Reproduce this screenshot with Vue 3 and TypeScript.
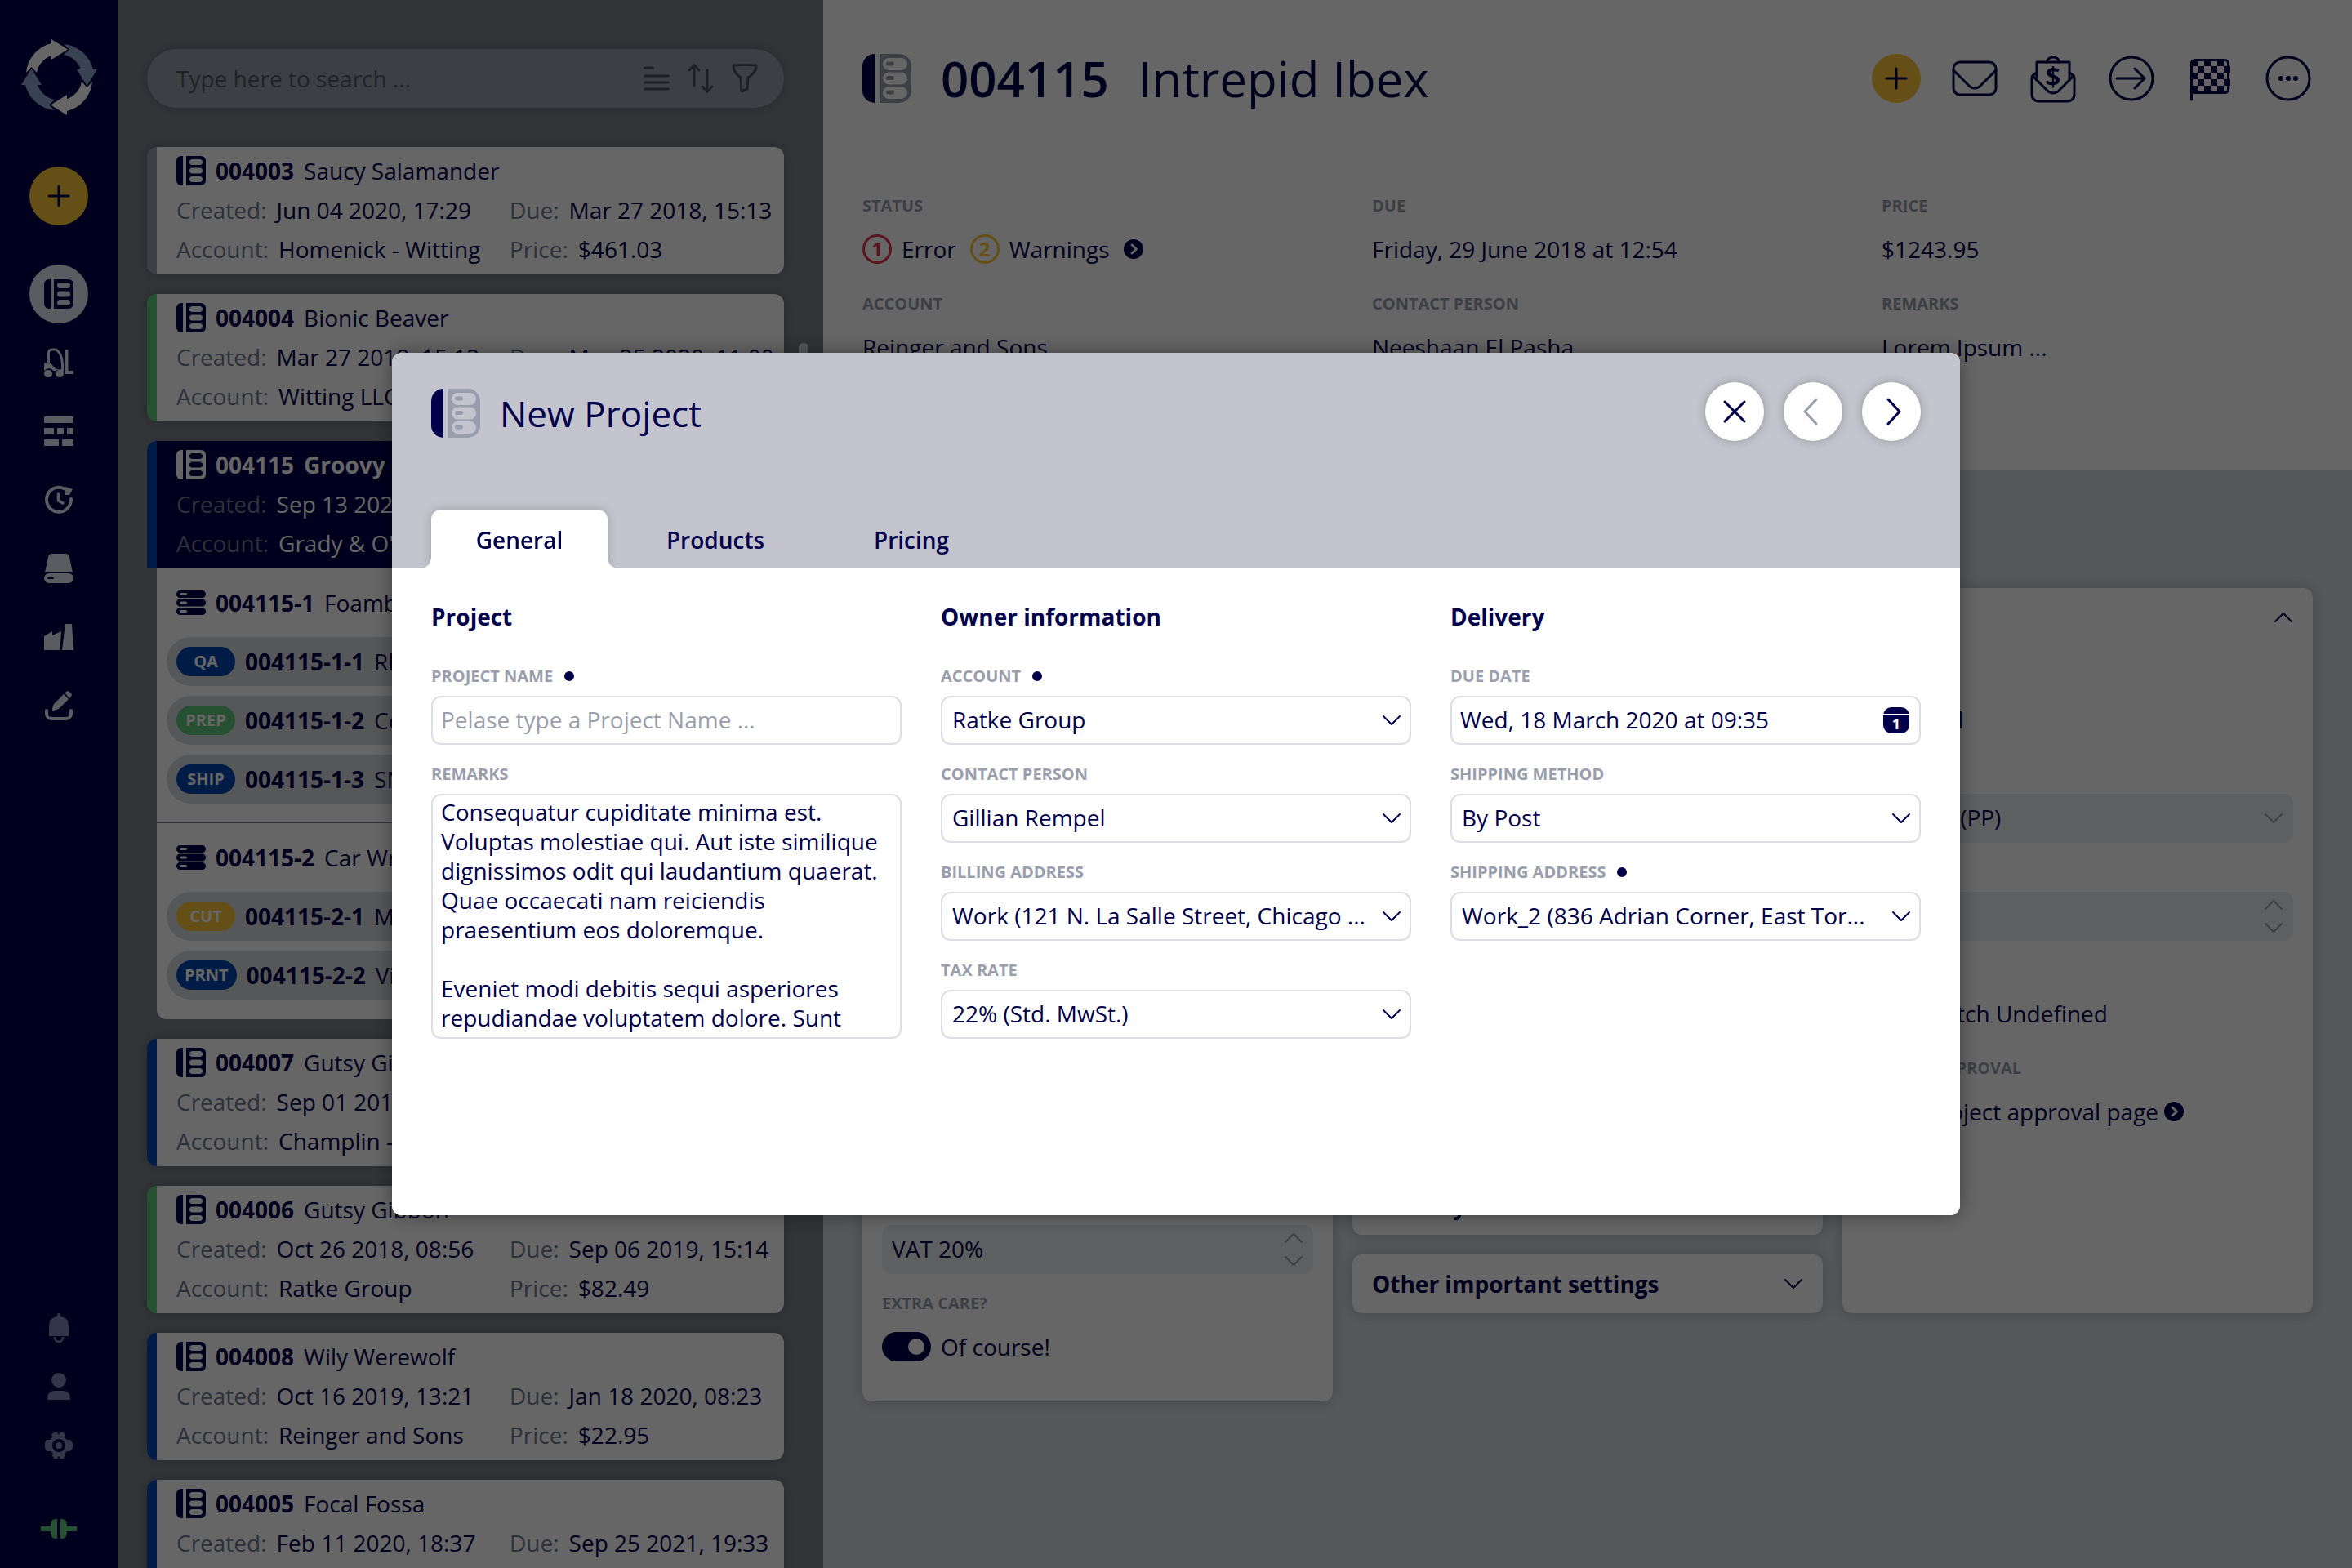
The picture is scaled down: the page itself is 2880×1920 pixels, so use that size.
<script setup lang="ts">
import { h, ref } from 'vue'

interface Shape {
  d: string
  stroke?: number
  color?: string
}
interface IconDef {
  w: number
  h: number
  shapes: Shape[]
}

/** Path data of a rounded rectangle, used for bars, slots and frames. */
function box(x: number, y: number, w: number, ht: number, r: number): string {
  return (
    `M${x + r} ${y}h${w - 2 * r}a${r} ${r} 0 0 1 ${r} ${r}v${ht - 2 * r}` +
    `a${r} ${r} 0 0 1 ${-r} ${r}h${-(w - 2 * r)}a${r} ${r} 0 0 1 ${-r} ${-r}` +
    `v${-(ht - 2 * r)}a${r} ${r} 0 0 1 ${r} ${-r}z`
  )
}

function checkers(): string {
  let d = ''
  for (let row = 0; row < 5; row++) {
    for (let col = 0; col < 6; col++) {
      if ((row + col) % 2 === 0) d += `M${7 + col * 8} ${7 + row * 8}h8v8h-8z`
    }
  }
  return d
}

const arrow =
  'M6 41A41 41 0 0 1 37 5V0L57 12.5L37 25V20A28 28 0 0 0 19 41L12.5 34Z'

const icons: Record<string, IconDef> = {
  project: {
    w: 36, h: 36,
    shapes: [
      { d: 'M8 0H6a6 6 0 0 0-6 6v24a6 6 0 0 0 6 6h2z' },
      {
        d: 'M12 0h18a6 6 0 0 1 6 6v24a6 6 0 0 1-6 6H12z' +
          box(16, 4, 16, 7, 3.5) + box(16, 14.5, 16, 7, 3.5) + box(16, 25, 16, 7, 3.5),
      },
    ],
  },
  projectLarge: {
    w: 60, h: 60,
    shapes: [
      { d: 'M15 0a15 15 0 0 0-15 15v30a15 15 0 0 0 15 15z' },
      {
        color: '#9a9eac',
        d: 'M21 0h24a15 15 0 0 1 15 15v30a15 15 0 0 1-15 15H21z' +
          box(25, 5, 30, 15, 7.5) + box(29, 9.5, 10, 5, 2.5) +
          box(25, 22.5, 30, 15, 7.5) + box(29, 27, 10, 5, 2.5) +
          box(25, 40, 30, 15, 7.5) + box(29, 44.5, 10, 5, 2.5),
      },
    ],
  },
  item: {
    w: 36, h: 30,
    shapes: [0, 10.5, 21].map((y) => ({
      d: box(0, y, 36, 9, 4.5) + box(4, y + 3, 9, 3, 1.5),
    })),
  },
  plus: { w: 28, h: 28, shapes: [{ d: 'M14 2v24M2 14h24', stroke: 3 }] },
  forklift: {
    w: 36, h: 36,
    shapes: [
      { d: 'M5.5 20V6a4 4 0 0 1 4-4h5c5 3 7.500 9 8 18v8', stroke: 3 },
      { d: 'M2 18h5l8 8h9v3h-1a6 6 0 0 0-9-1h-3a6 6 0 0 0-10 0l-1-1v-7a2 2 0 0 1 2-2z' },
      { d: box(0, 27, 10, 9, 4.5) + box(14, 27, 10, 9, 4.5) },
      { d: 'M26 2h3.500v26H36v4H26z' },
    ],
  },
  planning: {
    w: 36, h: 36,
    shapes: [
      {
        d: box(0, 0, 36, 8, 1) + box(0, 14, 12, 8, 1) + box(16, 14, 8, 8, 1) +
          box(28, 14, 8, 8, 1) + box(0, 28, 18, 8, 1) + box(22, 28, 14, 8, 1),
      },
    ],
  },
  clock: {
    w: 36, h: 36,
    shapes: [
      { d: 'M24.500 4.200A15 15 0 1 0 33 17', stroke: 4 },
      { d: 'M26 2l9 3-4 7h-5z' },
      { d: 'M17.500 11v8l5.500 3', stroke: 3.5 },
    ],
  },
  drive: {
    w: 36, h: 36,
    shapes: [
      { d: 'M10 0h16a5 5 0 0 1 5 4l4 19q-2-1-4-1H5q-2 0-4 1L5 4a5 5 0 0 1 5-4z' },
      { d: box(0, 24, 36, 12, 6) + box(4, 29, 8, 2, 1) },
    ],
  },
  factory: {
    w: 36, h: 36,
    shapes: [{ d: 'M0 34V17l10-6v5l11-5-1.500 23zM22 34l4-32h8l2 32z' }],
  },
  edit: {
    w: 36, h: 36,
    shapes: [
      { d: 'M10 24q0-7 4-10L24 4l6 6-10 10q-4 4-10 4zM25.500 2.500l1-1q2-2 4-1l3 3q1 2-1 4l-1.500 1.500z' },
      { d: 'M3 24v4a6 6 0 0 0 6 6h18a6 6 0 0 0 6-6v-4', stroke: 4 },
    ],
  },
  bell: {
    w: 36, h: 36,
    shapes: [
      { d: 'M16 2a2 2 0 0 1 4 0v2q10 1 10 12v12H6V16Q6 5 16 4z' },
      { d: 'M13 30a5 5 0 0 0 10 0', stroke: 2.5 },
    ],
  },
  user: {
    w: 36, h: 36,
    shapes: [{ d: box(9, 1, 18, 18, 9) + 'M4 34q0-11 8-11h12q8 0 8 11z' }],
  },
  gear: {
    w: 36, h: 36,
    shapes: [
      {
        d: 'M13 2h3l2 3 2-3h3l3 2-1 4 3 3h4l3 4v6l-3 4h-4l-3 3 1 3-3 3h-3l-2-3-2 3h-3l-3-3 1-3-3-3H3l-2-4v-6l2-4h4l3-3-1-4z' +
          box(10, 10, 16, 16, 8) + box(14, 14, 8, 8, 4),
      },
    ],
  },
  plug: {
    w: 44, h: 24,
    shapes: [{ d: 'M0 9h12q0-9 6-9h2v24h-2q-6 0-6-9H0zM24 0h2q6 0 6 9h12v6H32q0 9-6 9h-2z' }],
  },
  lines: {
    w: 36, h: 36,
    shapes: [{ d: 'M3.500 5h10M3.500 15h29M3.500 23h29M3.500 31h29', stroke: 3 }],
  },
  sort: {
    w: 36, h: 36,
    shapes: [{ d: 'M10 27V2M4 8l6-6.500L16 8M26 8v25M20 28l6 6.500L32 28', stroke: 3 }],
  },
  filter: {
    w: 36, h: 36,
    shapes: [{ d: 'M4 2q14-1 28 0q0 9-10 15l-1 14-7 3-1-17Q4 11 4 2z', stroke: 3 }],
  },
  mail: {
    w: 60, h: 60,
    shapes: [
      { d: box(4, 10, 52, 40, 8), stroke: 3 },
      { d: 'M4 20l20 20q6 4 12 0l20-20', stroke: 3 },
    ],
  },
  invoice: {
    w: 60, h: 60,
    shapes: [
      { d: 'M10 23l-4 3q-2 1-2 4v20a8 8 0 0 0 8 8h36a8 8 0 0 0 8-8V30q0-3-2-4l-4-3', stroke: 3 },
      { d: 'M5 27l19 19q6 4 12 0l19-19', stroke: 3 },
      { d: 'M10 32V10h40v22', stroke: 3 },
      { d: 'M22 10q2-6 8-6t8 6', stroke: 3 },
    ],
  },
  forward: {
    w: 60, h: 60,
    shapes: [{ d: box(4, 4, 52, 52, 26) + 'M12 30h34M34 18l12 12-12 12', stroke: 3 }],
  },
  flag: {
    w: 60, h: 60,
    shapes: [
      { d: box(7.5, 7.5, 45, 40, 4) + 'M7.500 44v12', stroke: 3 },
      { d: checkers() },
    ],
  },
  more: {
    w: 60, h: 60,
    shapes: [
      { d: box(4, 4, 52, 52, 26), stroke: 3 },
      { d: box(18, 27, 6, 6, 3) + box(27, 27, 6, 6, 3) + box(36, 27, 6, 6, 3) },
    ],
  },
  close: { w: 28, h: 28, shapes: [{ d: 'M2 2l24 24M26 2L2 26', stroke: 3 }] },
  prev: { w: 36, h: 36, shapes: [{ d: 'M22 3L8 18l14 15', stroke: 3 }] },
  next: { w: 36, h: 36, shapes: [{ d: 'M14 3l14 15-14 15', stroke: 3 }] },
  down: { w: 24, h: 14, shapes: [{ d: 'M2 2l10 10L22 2', stroke: 2 }] },
  up: { w: 24, h: 14, shapes: [{ d: 'M2 12L12 2l10 10', stroke: 2 }] },
  go: {
    w: 24, h: 24,
    shapes: [{ d: box(0, 0, 24, 24, 12) }, { d: 'M10 7l5.500 5-5.500 5', stroke: 3, color: '#fff' }],
  },
}

const Icon = (props: { name: string }) => {
  const icon = icons[props.name]
  return h(
    'svg',
    { viewBox: `0 0 ${icon.w} ${icon.h}`, width: icon.w, height: icon.h, 'aria-hidden': 'true' },
    icon.shapes.map((s) =>
      h('path', {
        d: s.d,
        fill: s.stroke ? 'none' : s.color ?? 'currentColor',
        'fill-rule': 'evenodd',
        stroke: s.stroke ? s.color ?? 'currentColor' : 'none',
        'stroke-width': s.stroke,
        'stroke-linecap': 'round',
        'stroke-linejoin': 'round',
      }),
    ),
  )
}
Icon.props = ['name']

const nav = [
  { icon: 'project', label: 'Projects', active: true },
  { icon: 'forklift', label: 'Logistics', active: false },
  { icon: 'planning', label: 'Planning', active: false },
  { icon: 'clock', label: 'Time tracking', active: false },
  { icon: 'drive', label: 'Storage', active: false },
  { icon: 'factory', label: 'Production', active: false },
  { icon: 'edit', label: 'Design', active: false },
]
const tools = [
  { icon: 'bell', label: 'Notifications' },
  { icon: 'user', label: 'Profile' },
  { icon: 'gear', label: 'Settings' },
]

interface Job { tag: string; tone: string; id: string; name: string }
interface Group { id: string; name: string; jobs: Job[] }
interface Project {
  id: string
  name: string
  tone: string
  created: string
  due: string
  account: string
  price: string
  groups?: Group[]
}

const projects: Project[] = [
  { id: '004003', name: 'Saucy Salamander', tone: 'grey', created: 'Jun 04 2020, 17:29', due: 'Mar 27 2018, 15:13', account: 'Homenick - Witting', price: '$461.03' },
  { id: '004004', name: 'Bionic Beaver', tone: 'green', created: 'Mar 27 2018, 15:12', due: 'May 25 2020, 11:00', account: 'Witting LLC', price: '$120.40' },
  {
    id: '004115', name: 'Groovy Gorilla', tone: 'blue', created: 'Sep 13 2020, 10:12', due: 'Jun 29 2018, 12:54', account: "Grady & O'Keefe", price: '$1243.95',
    groups: [
      {
        id: '004115-1', name: 'Foamboard',
        jobs: [
          { tag: 'QA', tone: 'blue', id: '004115-1-1', name: 'Rhino' },
          { tag: 'PREP', tone: 'green', id: '004115-1-2', name: 'Cobra' },
          { tag: 'SHIP', tone: 'blue', id: '004115-1-3', name: 'SNES' },
        ],
      },
      {
        id: '004115-2', name: 'Car Wrap',
        jobs: [
          { tag: 'CUT', tone: 'yellow', id: '004115-2-1', name: 'Mask' },
          { tag: 'PRNT', tone: 'blue', id: '004115-2-2', name: 'Vinyl' },
        ],
      },
    ],
  },
  { id: '004007', name: 'Gutsy Gibbon', tone: 'blue', created: 'Sep 01 2019, 09:20', due: 'Oct 02 2019, 12:00', account: 'Champlin - Rau', price: '$310.00' },
  { id: '004006', name: 'Gutsy Gibbon', tone: 'green', created: 'Oct 26 2018, 08:56', due: 'Sep 06 2019, 15:14', account: 'Ratke Group', price: '$82.49' },
  { id: '004008', name: 'Wily Werewolf', tone: 'blue', created: 'Oct 16 2019, 13:21', due: 'Jan 18 2020, 08:23', account: 'Reinger and Sons', price: '$22.95' },
  { id: '004005', name: 'Focal Fossa', tone: 'blue', created: 'Feb 11 2020, 18:37', due: 'Sep 25 2021, 19:33', account: 'Homenick - Witting', price: '$75.10' },
]

const actions = [
  { icon: 'mail', label: 'Send mail' },
  { icon: 'invoice', label: 'Send invoice' },
  { icon: 'forward', label: 'Forward' },
  { icon: 'flag', label: 'Finish' },
  { icon: 'more', label: 'More' },
]

const tabs = ['General', 'Products', 'Pricing']
const activeTab = ref('General')

const projectName = ref('')
const remarks = ref(
  'Consequatur cupiditate minima est. Voluptas molestiae qui. Aut iste similique dignissimos odit qui laudantium quaerat. Quae occaecati nam reiciendis praesentium eos doloremque.\n\nEveniet modi debitis sequi asperiores repudiandae voluptatem dolore. Sunt',
)
const dueDate = ref('Wed, 18 March 2020 at 09:35')

const ownerFields = [
  { id: 'account', label: 'Account', required: true, value: 'Ratke Group' },
  { id: 'contact', label: 'Contact person', required: false, value: 'Gillian Rempel' },
  { id: 'billing', label: 'Billing address', required: false, value: 'Work (121 N. La Salle Street, Chicago ...' },
  { id: 'tax', label: 'Tax rate', required: false, value: '22% (Std. MwSt.)' },
]
const deliveryFields = [
  { id: 'method', label: 'Shipping method', required: false, value: 'By Post' },
  { id: 'shipping', label: 'Shipping address', required: true, value: 'Work_2 (836 Adrian Corner, East Tor...' },
]
</script>

<template>
  <div class="app">
    <nav class="sidebar" aria-label="Main">
      <svg class="logo" viewBox="0 0 93 93" width="93" height="93" aria-hidden="true">
        <path
          v-for="n in 4"
          :key="n"
          :d="arrow"
          :fill="n % 2 ? '#ffffff' : '#8ea6cc'"
          :transform="`rotate(${(n - 1) * 90} 46.5 46.5)`"
        />
      </svg>
      <button class="round yellow" aria-label="Create"><Icon name="plus" /></button>
      <div class="nav-list">
        <button
          v-for="n in nav"
          :key="n.label"
          class="nav-item"
          :class="{ active: n.active }"
          :aria-label="n.label"
        >
          <Icon :name="n.icon" />
        </button>
      </div>
      <div class="tool-list">
        <button v-for="t in tools" :key="t.label" class="tool" :aria-label="t.label">
          <Icon :name="t.icon" />
        </button>
      </div>
      <span class="plug"><Icon name="plug" /></span>
    </nav>

    <section class="list" aria-label="Projects">
      <div class="search">
        <input type="text" aria-label="Search" placeholder="Type here to search ..." />
        <button aria-label="View"><Icon name="lines" /></button>
        <button aria-label="Sort"><Icon name="sort" /></button>
        <button aria-label="Filter"><Icon name="filter" /></button>
      </div>
      <article
        v-for="p in projects"
        :key="p.id"
        class="project"
        :class="{ open: p.groups }"
      >
        <div class="summary" :class="'edge-' + p.tone">
          <h3><Icon name="project" /><b>{{ p.id }}</b><span>{{ p.name }}</span></h3>
          <dl>
            <div><dt>Created:</dt><dd>{{ p.created }}</dd></div>
            <div><dt>Due:</dt><dd>{{ p.due }}</dd></div>
            <div><dt>Account:</dt><dd>{{ p.account }}</dd></div>
            <div><dt>Price:</dt><dd>{{ p.price }}</dd></div>
          </dl>
        </div>
        <div v-for="g in p.groups" :key="g.id" class="group">
          <h4><Icon name="item" /><b>{{ g.id }}</b><span>{{ g.name }}</span></h4>
          <ul>
            <li v-for="j in g.jobs" :key="j.id">
              <span class="tag" :class="'fill-' + j.tone">{{ j.tag }}</span>
              <b>{{ j.id }}</b><span>{{ j.name }}</span>
            </li>
          </ul>
        </div>
      </article>
      <span class="thumb"></span>
    </section>

    <main class="detail">
      <header class="detail-head">
        <div class="title-row">
          <Icon name="projectLarge" />
          <h1><b>004115</b><span>Intrepid Ibex</span></h1>
          <div class="actions">
            <button class="action yellow" aria-label="Add"><Icon name="plus" /></button>
            <button v-for="a in actions" :key="a.icon" class="action" :aria-label="a.label">
              <Icon :name="a.icon" />
              <span v-if="a.icon === 'invoice'" class="dollar">$</span>
            </button>
          </div>
        </div>
        <div class="facts">
          <div class="field">
            <span class="label">Status</span>
            <div class="value status">
              <span class="count red">1</span><span>Error</span>
              <span class="count amber">2</span><span>Warnings</span>
              <a href="#status" aria-label="Show status"><Icon name="go" /></a>
            </div>
          </div>
          <div class="field"><span class="label">Due</span><div class="value">Friday, 29 June 2018 at 12:54</div></div>
          <div class="field"><span class="label">Price</span><div class="value">$1243.95</div></div>
          <div class="field"><span class="label">Account</span><div class="value">Reinger and Sons</div></div>
          <div class="field"><span class="label">Contact person</span><div class="value">Neeshaan El Pasha</div></div>
          <div class="field"><span class="label">Remarks</span><div class="value">Lorem Ipsum ...</div></div>
        </div>
      </header>

      <div class="panels">
        <section class="panel">
          <button class="panel-head">Production<Icon name="up" /></button>
          <div class="panel-body">
            <div class="field"><span class="label">Printer</span><div class="value">Undefined</div></div>
            <div class="field"><span class="label">Material</span><div class="value">Undefined</div></div>
            <div class="field"><span class="label">Width</span><div class="value">Undefined</div></div>
            <div class="field"><span class="label">Height</span><div class="value">Undefined</div></div>
            <div class="field"><span class="label">Quantity</span><div class="value">Undefined</div></div>
            <h5>Taxes</h5>
            <div class="field">
              <label class="label" for="vat">VAT</label>
              <div class="filled">
                <input id="vat" type="text" value="VAT 20%" />
                <span class="steps"><button aria-label="Increase"><Icon name="up" /></button><button aria-label="Decrease"><Icon name="down" /></button></span>
              </div>
            </div>
            <div class="field">
              <span class="label">Extra care?</span>
              <label class="value switch"><input type="checkbox" role="switch" checked /><span>Of course!</span></label>
            </div>
          </div>
        </section>

        <div class="stack">
          <section class="panel tall"><button class="panel-head">Details<Icon name="up" /></button></section>
          <section class="panel"><button class="panel-head">Delivery<Icon name="down" /></button></section>
          <section class="panel"><button class="panel-head">Other important settings<Icon name="down" /></button></section>
        </div>

        <section class="panel wide">
          <button class="panel-head">Options<Icon name="up" /></button>
          <div class="panel-body">
            <div class="field"><span class="label">State</span><div class="value">Delivered</div></div>
            <div class="field">
              <label class="label" for="payment">Payment</label>
              <div class="filled">
                <select id="payment"><option>Prepaid (PP)</option></select>
                <span class="steps"><Icon name="down" /></span>
              </div>
            </div>
            <div class="field">
              <label class="label" for="copies">Copies</label>
              <div class="filled">
                <input id="copies" type="text" value="1" />
                <span class="steps"><button aria-label="Increase"><Icon name="up" /></button><button aria-label="Decrease"><Icon name="down" /></button></span>
              </div>
            </div>
            <div class="field">
              <span class="label">Switch</span>
              <label class="value switch"><input type="checkbox" role="switch" /><span>Switch Undefined</span></label>
            </div>
            <div class="field">
              <span class="label">Project approval</span>
              <a class="value link" href="#approval">Go to project approval page<Icon name="go" /></a>
            </div>
          </div>
        </section>
      </div>
    </main>

    <div class="backdrop">
      <div class="modal" role="dialog" aria-modal="true" aria-labelledby="dialog-title">
        <header class="modal-head">
          <div class="modal-bar">
            <div class="modal-title">
              <Icon name="projectLarge" />
              <h2 id="dialog-title">New Project</h2>
            </div>
            <div class="modal-buttons">
              <button aria-label="Close"><Icon name="close" /></button>
              <button aria-label="Previous" disabled><Icon name="prev" /></button>
              <button aria-label="Next"><Icon name="next" /></button>
            </div>
          </div>
          <div class="tabs" role="tablist">
            <button
              v-for="t in tabs"
              :key="t"
              role="tab"
              :aria-selected="t === activeTab"
              :class="{ current: t === activeTab }"
              @click="activeTab = t"
            >
              {{ t }}
            </button>
          </div>
        </header>
        <form class="modal-body" @submit.prevent>
          <section>
            <h6>Project</h6>
            <div class="field">
              <label class="label required" for="name">Project name</label>
              <input id="name" v-model="projectName" class="control" type="text" placeholder="Pelase type a Project Name ..." />
            </div>
            <div class="field">
              <label class="label" for="remarks">Remarks</label>
              <textarea id="remarks" v-model="remarks" class="control"></textarea>
            </div>
          </section>
          <section>
            <h6>Owner information</h6>
            <div v-for="f in ownerFields" :key="f.id" class="field">
              <label class="label" :class="{ required: f.required }" :for="f.id">{{ f.label }}</label>
              <div class="pick">
                <select :id="f.id" class="control"><option>{{ f.value }}</option></select>
                <Icon name="down" />
              </div>
            </div>
          </section>
          <section>
            <h6>Delivery</h6>
            <div class="field">
              <label class="label" for="due">Due date</label>
              <div class="pick">
                <input id="due" v-model="dueDate" class="control" type="text" />
                <span class="calendar">1</span>
              </div>
            </div>
            <div v-for="f in deliveryFields" :key="f.id" class="field">
              <label class="label" :class="{ required: f.required }" :for="f.id">{{ f.label }}</label>
              <div class="pick">
                <select :id="f.id" class="control"><option>{{ f.value }}</option></select>
                <Icon name="down" />
              </div>
            </div>
          </section>
        </form>
      </div>
    </div>
  </div>
</template>

<style>
body {
  margin: 0;
  overflow: hidden;
}
</style>

<style scoped>
.app {
  --navy: #00004b;
  --grey: #9a9eac;
  --pale: #d8dade;
  --yellow: #fac83a;
  --blue: #0045b0;
  --green: #5cc87d;
  display: flex;
  height: 100vh;
  overflow: hidden;
  font: 28px/48px "Open Sans", "Noto Sans", sans-serif;
  color: var(--navy);
}
.app *,
.app *::before,
.app *::after {
  box-sizing: border-box;
}
h1, h2, h3, h4, h5, h6, dl, dd, ul {
  margin: 0;
  padding: 0;
  font-size: inherit;
  font-weight: inherit;
}
ul {
  list-style: none;
}
button,
input,
select,
textarea {
  margin: 0;
  padding: 0;
  border: 0;
  background: none;
  font: inherit;
  color: inherit;
  outline: none;
  appearance: none;
}
button {
  display: flex;
  align-items: center;
  justify-content: center;
}
svg {
  display: block;
  flex: none;
}
a {
  color: inherit;
  text-decoration: none;
}

/* Sidebar */
.sidebar {
  display: flex;
  flex: none;
  flex-direction: column;
  align-items: center;
  width: 144px;
  padding: 48px 0 36px;
  background: var(--navy);
  color: #e3e7f5;
}
.round {
  width: 72px;
  height: 72px;
  margin: 63px 0 48px;
  border-radius: 50%;
}
.yellow {
  background: var(--yellow);
  color: var(--navy);
}
.nav-list {
  display: flex;
  flex-direction: column;
  gap: 12px;
}
.nav-item {
  width: 72px;
  height: 72px;
  border-radius: 50%;
}
.nav-item.active {
  background: #e3e7f5;
  color: var(--navy);
}
.tool-list {
  margin-top: auto;
  color: #7d88b4;
}
.tool {
  width: 72px;
  height: 72px;
}
.plug {
  margin-top: 54px;
  color: var(--green);
}

/* Project list */
.list {
  position: relative;
  display: flex;
  flex: none;
  flex-direction: column;
  gap: 24px;
  width: 864px;
  padding: 60px 48px 0 36px;
  overflow: hidden;
  background: #7d8089;
}
.search {
  display: flex;
  flex: none;
  align-items: center;
  gap: 18px;
  height: 72px;
  margin-bottom: 24px;
  padding: 0 30px 0 36px;
  border-radius: 36px;
  background: var(--grey);
  box-shadow: 0 0 12px rgba(0, 0, 0, 0.2);
  color: #4f5159;
}
.search input {
  flex: 1;
  min-width: 0;
  height: 48px;
}
.search input::placeholder {
  color: #565963;
  opacity: 1;
}
.project {
  flex: none;
  border-radius: 12px;
  box-shadow: 0 0 12px rgba(0, 0, 0, 0.2);
}
.summary {
  padding: 5px 0 7px 24px;
  border-left: 12px solid var(--grey);
  border-radius: 12px;
  background: #fff;
}
.edge-green { border-left-color: var(--green); }
.edge-blue { border-left-color: var(--blue); }
.project b {
  font-weight: 700;
}
h3, h4 {
  display: flex;
  align-items: center;
  gap: 12px;
  white-space: nowrap;
}
dl {
  display: grid;
  grid-template-columns: 408px 1fr;
}
dl div {
  display: flex;
  gap: 12px;
  white-space: nowrap;
}
dt {
  color: #737a91;
}
.open {
  box-shadow: none;
}
.open .summary {
  border-radius: 12px 12px 0 0;
  background: var(--navy);
  color: #fff;
}
.open h3 {
  font-weight: 700;
}
.group {
  margin-left: 12px;
  padding: 0 12px 22px;
  border-bottom: 2px solid #7d8089;
  background: #fff;
}
.group:last-child {
  padding-bottom: 24px;
  border-bottom: 0;
  border-radius: 0 0 12px 12px;
}
.group h4 {
  height: 84px;
  padding-left: 12px;
}
.group ul {
  display: flex;
  flex-direction: column;
  gap: 12px;
}
.group li {
  display: flex;
  align-items: center;
  gap: 12px;
  height: 60px;
  padding: 0 12px;
  border-radius: 30px;
  background: var(--pale);
}
.tag {
  min-width: 72px;
  padding: 0 10px;
  border-radius: 18px;
  font-size: 20px;
  font-weight: 700;
  line-height: 36px;
  text-align: center;
  color: #fff;
}
.fill-blue { background: var(--blue); }
.fill-green { background: var(--green); }
.fill-yellow { background: var(--yellow); }
.thumb {
  position: absolute;
  top: 420px;
  right: 18px;
  width: 12px;
  height: 480px;
  border-radius: 6px;
  background: var(--pale);
}

/* Detail page */
.detail {
  flex: 1;
  min-width: 0;
  background: var(--pale);
}
.detail-head {
  padding: 66px 0 120px 48px;
  background: #fff;
}
.title-row {
  display: flex;
  align-items: center;
  height: 60px;
  margin-bottom: 90px;
  padding-right: 48px;
}
h1 {
  display: flex;
  gap: 36px;
  padding-left: 36px;
  font-size: 60px;
  line-height: 60px;
  white-space: nowrap;
}
h1 b {
  font-weight: 600;
}
.actions {
  display: flex;
  gap: 36px;
  margin-left: auto;
}
.action {
  position: relative;
  width: 60px;
  height: 60px;
  border-radius: 50%;
}
.dollar {
  position: absolute;
  inset: 0;
  font-size: 32px;
  font-weight: 700;
  line-height: 56px;
  text-align: center;
}
.facts {
  display: grid;
  grid-template-columns: repeat(3, 1fr);
  column-gap: 48px;
}
.field {
  display: flex;
  flex-direction: column;
  gap: 12px;
  padding-top: 24px;
}
.label {
  display: flex;
  align-items: center;
  gap: 14px;
  font-size: 20px;
  font-weight: 700;
  line-height: 24px;
  text-transform: uppercase;
  color: var(--grey);
}
.required::after {
  content: "";
  width: 12px;
  height: 12px;
  border-radius: 50%;
  background: var(--navy);
}
.value {
  display: flex;
  align-items: center;
  height: 60px;
  padding-bottom: 2px;
  white-space: nowrap;
}
.status .count {
  width: 36px;
  height: 36px;
  margin-right: 12px;
  border: 3px solid;
  border-radius: 50%;
  font-size: 24px;
  font-weight: 700;
  line-height: 30px;
  text-align: center;
}
.status .amber,
.status a {
  margin-left: 17px;
}
.red { color: #e6324f; }
.amber { color: var(--yellow); }

.panels {
  display: grid;
  grid-template-columns: repeat(3, 1fr);
  gap: 24px;
  align-items: start;
  padding: 144px 48px 0;
}
.stack {
  display: flex;
  flex-direction: column;
  gap: 24px;
}
.panel {
  border-radius: 12px;
  background: #fff;
  box-shadow: 0 0 18px rgba(0, 0, 0, 0.2);
}
.tall {
  min-height: 696px;
}
.wide {
  min-height: 888px;
}
.panel-head {
  justify-content: space-between;
  width: 100%;
  height: 72px;
  padding: 0 24px;
  font-weight: 700;
}
.panel-body {
  padding: 0 24px 36px;
}
h5 {
  font-weight: 700;
}
.filled {
  display: flex;
  align-items: center;
  height: 60px;
  padding: 0 12px;
  border-radius: 12px;
  background: #ebedf1;
}
.filled input,
.filled select {
  flex: 1;
  min-width: 0;
  height: 60px;
  padding-bottom: 2px;
}
.steps {
  display: flex;
  flex-direction: column;
  gap: 14px;
  color: var(--grey);
}
.switch {
  gap: 12px;
}
.link {
  gap: 7px;
}
.switch input {
  width: 60px;
  height: 36px;
  padding: 8px;
  border-radius: 18px;
  background: var(--grey);
}
.switch input::before {
  content: "";
  display: block;
  width: 20px;
  height: 20px;
  border-radius: 50%;
  background: #fff;
}
.switch input:checked {
  background: var(--navy);
}
.switch input:checked::before {
  margin-left: auto;
}

/* Dialog */
.backdrop {
  position: fixed;
  inset: 0;
  display: flex;
  align-items: center;
  justify-content: center;
  background: rgba(0, 0, 0, 0.6);
}
.modal {
  display: flex;
  flex-direction: column;
  width: 66.6667%;
  min-height: 55%;
  border-radius: 12px;
  background: #fff;
  box-shadow: 0 0 24px rgba(0, 0, 0, 0.4);
}
.modal-head {
  display: flex;
  flex-direction: column;
  justify-content: space-between;
  height: 264px;
  padding: 36px 48px 0;
  border-radius: 12px 12px 0 0;
  background: #c4c4ce;
}
.modal-bar {
  display: flex;
  justify-content: space-between;
}
.modal-title {
  display: flex;
  align-items: center;
  gap: 24px;
  height: 76px;
}
h2 {
  font-size: 44px;
  line-height: 60px;
}
.modal-buttons {
  display: flex;
  gap: 24px;
}
.modal-buttons button {
  width: 72px;
  height: 72px;
  border-radius: 50%;
  background: #fff;
  box-shadow: 0 0 12px rgba(0, 0, 0, 0.25);
}
.modal-buttons button:disabled {
  color: var(--grey);
}
.tabs {
  display: flex;
  gap: 24px;
}
.tabs button {
  width: 216px;
  height: 72px;
  padding-top: 2px;
  font-weight: 600;
}
.tabs .current {
  position: relative;
  border-radius: 12px 12px 0 0;
  background: #fff;
  box-shadow: 0 0 12px rgba(0, 0, 0, 0.2);
}
.current::before,
.current::after {
  content: "";
  position: absolute;
  bottom: 0;
  width: 12px;
  height: 12px;
}
.current::before {
  right: 100%;
  background: radial-gradient(circle at 0 0, transparent 11px, #fff 12px);
}
.current::after {
  left: 100%;
  background: radial-gradient(circle at 100% 0, transparent 11px, #fff 12px);
}
.modal-body {
  position: relative;
  display: grid;
  flex: 1;
  grid-template-columns: repeat(3, 1fr);
  gap: 48px;
  align-items: start;
  padding: 36px 48px;
  border-radius: 0 0 12px 12px;
  background: #fff;
}
h6 {
  height: 60px;
  font-weight: 700;
  line-height: 46px;
}
.control {
  width: 100%;
  height: 60px;
  padding: 0 10px 2px;
  border: 2px solid #dcdde5;
  border-radius: 12px;
  background: #fff;
}
.control::placeholder {
  color: var(--grey);
  opacity: 1;
}
select.control {
  padding: 0 48px 2px 12px;
}
textarea.control {
  display: block;
  height: 300px;
  padding-top: 2px;
  line-height: 36px;
  resize: none;
  overflow: hidden;
}
.pick {
  display: flex;
  position: relative;
  align-items: center;
}
.pick svg,
.calendar {
  position: absolute;
  right: 12px;
  pointer-events: none;
}
.calendar {
  right: 14px;
  width: 32px;
  height: 32px;
  border-radius: 10px;
  background: linear-gradient(var(--navy) 8px, #fff 8px, #fff 10px, var(--navy) 10px);
  font-size: 18px;
  font-weight: 700;
  line-height: 40px;
  text-align: center;
  color: #fff;
}
</style>
